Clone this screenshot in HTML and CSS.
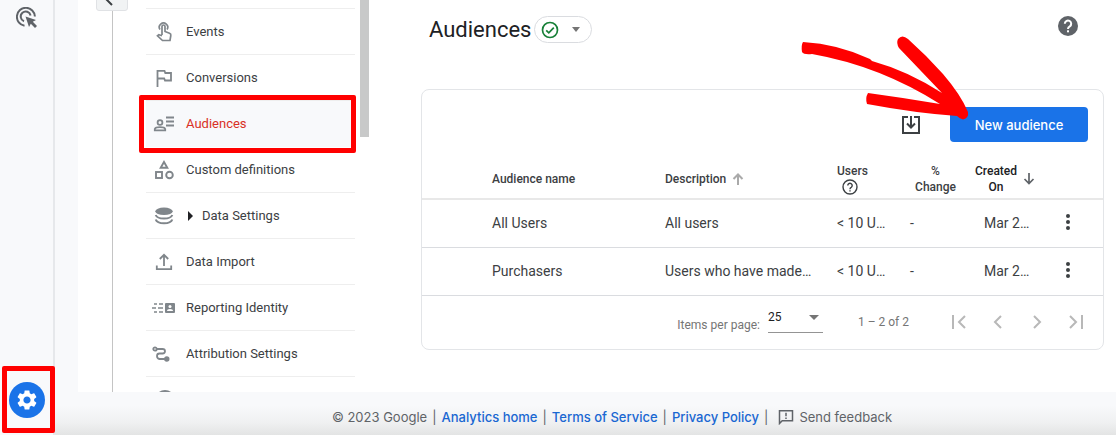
FILE: index.html
```html
<!DOCTYPE html>
<html lang="en">
<head>
  <meta charset="UTF-8" />
  <title>Audiences</title>
  <meta name="viewport" content="width=device-width, initial-scale=1.0" />
  <link rel="stylesheet" href="styles.css">
</head>
<body>

  <nav class="rail" aria-label="Main">
    <a href="#" class="rail-link" title="Advertising">
      <svg width="22" height="22" viewBox="0 0 22 22" fill="none" stroke="#5f6368" stroke-width="2">
        <path d="M8.500 18.700A9 9 0 1 1 18.900 9.500" />
        <path d="M8 14.200A5 5 0 1 1 14.600 8.500" />
        <path d="M9.500 9.500L20 13L16.800 14.700L21 19L19 21L14.800 16.700L13 20Z" fill="#5f6368" stroke="none" />
      </svg>
    </a>
    <a href="#" class="rail-link rail-admin" title="Admin">
      <svg width="24" height="24" viewBox="0 0 24 24" fill="#fff">
        <path d="M19.140 12.940c.04-.3.060-.61.060-.94 0-.32-.02-.64-.07-.94l2.030-1.580c.18-.14.230-.41.120-.61l-1.920-3.320c-.12-.22-.37-.29-.59-.22l-2.390.96c-.5-.38-1.030-.7-1.620-.94l-.36-2.540c-.04-.24-.24-.41-.48-.41h-3.840c-.24 0-.43.170-.47.410l-.36 2.540c-.59.240-1.130.570-1.620.940l-2.390-.96c-.22-.08-.47 0-.59.220L2.740 8.870c-.12.210-.08.470.120.610l2.030 1.580c-.05.300-.09.630-.09.940s.02.640.070.940l-2.030 1.580c-.18.140-.23.410-.12.610l1.920 3.320c.12.220.370.290.590.220l2.390-.96c.5.380 1.030.700 1.620.940l.36 2.540c.05.240.240.410.480.410h3.840c.24 0 .44-.17.470-.41l.36-2.540c.59-.24 1.130-.56 1.620-.94l2.390.96c.22.080.470 0 .59-.22l1.920-3.320c.12-.22.070-.47-.12-.61l-2.010-1.580zM12 15.600c-1.980 0-3.600-1.620-3.600-3.600s1.620-3.600 3.600-3.600 3.600 1.620 3.600 3.600-1.620 3.600-3.600 3.600z" />
      </svg>
    </a>
  </nav>

  <div class="page">
    <div class="workspace">

      <aside class="sidebar">
        <button class="collapse" aria-label="Back">
          <svg width="20" height="20" viewBox="0 0 20 20" fill="none" stroke="#3c4043" stroke-width="2"><path d="M16 9H4M10 3L4 9L10 15" /></svg>
        </button>
        <ul class="menu">
          <li>
            <a href="#">
              <svg width="24" height="24" viewBox="0 0 24 24" fill="none" stroke="#80868b" stroke-width="1.700">
                <path d="M8 9.500A4.200 4.200 0 1 1 15 9.500" />
                <path d="M10 15V6.500a1.500 1.500 0 0 1 3 0V11.500L17.500 13.200Q19.200 14 18.800 15.500L18 20.500H10.500L5.500 15.800L6.800 14.800L10 15.800" />
              </svg>
              Events
            </a>
          </li>
          <li>
            <a href="#">
              <svg width="24" height="24" viewBox="0 0 24 24" fill="none" stroke="#80868b" stroke-width="1.800">
                <path d="M5.500 21V4.800H12.500L13.300 7H19V14.500H13L12.200 12.500H5.500" />
              </svg>
              Conversions
            </a>
          </li>
          <li class="current">
            <a href="#" aria-current="page">
              <svg width="24" height="24" viewBox="0 0 24 24" fill="none" stroke="#80868b" stroke-width="1.800">
                <circle cx="8" cy="10.500" r="2.400" />
                <path d="M2.800 18.300V17Q3.500 15.200 8 15.200T13.200 17V18.300Z" />
                <path d="M14 5.500H22M14 9.500H22M14 13.500H22" />
              </svg>
              Audiences
            </a>
          </li>
          <li>
            <a href="#">
              <svg width="24" height="24" viewBox="0 0 24 24" fill="none" stroke="#80868b" stroke-width="1.900">
                <path d="M12 4L15.300 9.700H8.700Z" />
                <rect x="4" y="14" width="6" height="6" />
                <circle cx="17.500" cy="17" r="3.300" />
              </svg>
              Custom definitions
            </a>
          </li>
          <li>
            <a href="#">
              <svg width="24" height="24" viewBox="0 0 24 24" fill="none" stroke="#80868b" stroke-width="2">
                <ellipse cx="12" cy="7.300" rx="8.700" ry="3.700" fill="#80868b" stroke="none" />
                <path d="M3.700 11Q5 14.500 12 14.500T20.300 11" />
                <path d="M3.700 15.500Q5 19.300 12 19.300T20.300 15.500" />
              </svg>
              <span class="expand"></span>
              Data Settings
            </a>
          </li>
          <li>
            <a href="#">
              <svg width="24" height="24" viewBox="0 0 24 24" fill="none" stroke="#80868b" stroke-width="1.800">
                <path d="M12 16V5M7.800 9L12 4.800L16.200 9M4.800 15.500V19.200H19.200V15.500" />
              </svg>
              Data Import
            </a>
          </li>
          <li>
            <a href="#">
              <svg width="24" height="24" viewBox="0 0 24 24" fill="none" stroke="#80868b" stroke-width="1.500">
                <path d="M2 8H5M7 8H11M0 12H4M6 12H11M2 16H5M7 16H11" />
                <rect x="13" y="7" width="10" height="10" rx="1" fill="#80868b" stroke="none" />
                <circle cx="18" cy="10.500" r="1.500" fill="#fff" stroke="none" />
                <path d="M15 15Q15 13 18 13T21 15Z" fill="#fff" stroke="none" />
              </svg>
              Reporting Identity
            </a>
          </li>
          <li>
            <a href="#">
              <svg width="24" height="24" viewBox="0 0 24 24" fill="none" stroke="#80868b" stroke-width="1.800">
                <circle cx="3" cy="7" r="1.700" />
                <path d="M5 7H10.500Q13 7 13 9.200T10.500 11.500H7.500Q5 11.500 5 14T7.500 17H13" />
                <circle cx="14.800" cy="17" r="1.800" fill="#80868b" />
              </svg>
              Attribution Settings
            </a>
          </li>
          <li>
            <a href="#" aria-label="History">
              <svg width="24" height="24" viewBox="0 0 24 24" fill="none" stroke="#80868b" stroke-width="2">
                <circle cx="13" cy="12" r="9" />
                <path d="M13 8V13L17 15" />
              </svg>
            </a>
          </li>
        </ul>
        <div class="scroll-thumb"></div>
      </aside>

      <main class="content">
        <header class="content-head">
          <h1>Audiences</h1>
          <button class="status" aria-label="Status">
            <svg width="18" height="18" viewBox="0 0 18 18" fill="none" stroke="#188038" stroke-width="1.700"><circle cx="9" cy="9" r="7.500" /><path d="M5.200 9.300L7.800 11.900L12.800 6.600" /></svg>
            <span class="caret"></span>
          </button>
          <button class="icon-btn help" aria-label="Help">
            <svg width="20" height="20" viewBox="0 0 20 20"><circle cx="10" cy="10" r="10" fill="#5f6368" /><path d="M6.800 7.800a3.200 3.200 0 1 1 5 2.600Q10 11.500 10 13" fill="none" stroke="#fff" stroke-width="2" /><rect x="9" y="14.300" width="2" height="2" fill="#fff" /></svg>
          </button>
        </header>

        <section class="card">
          <div class="toolbar">
            <button class="icon-btn" aria-label="Download">
              <svg width="20" height="20" viewBox="0 0 20 20" fill="none" stroke="#3c4043" stroke-width="2"><path d="M7 2H2V18H18V2H13M10 1V12M6 8.500L10 12.500L14 8.500" /></svg>
            </button>
            <div class="primary-wrap">
              <button class="primary">New audience</button>
              <svg class="pointer" width="172" height="88" viewBox="800 34 172 88" fill="#f00">
                <path d="M803 42Q838 44 870 59L872 61Q908 71 942 93L899 48Q896 43 898 39Q902 34 908 39Q926 55 943 74Q961 95 968 112Q969 118 963 119.500Q960 119 957 116Q915 113 867 104Q865 98 868 93Q905 98 940 104Q880 66 812 54Q804 55 802 52Q801 45 803 42Z" />
              </svg>
            </div>
          </div>

          <table>
            <colgroup>
              <col class="col-name"><col><col class="col-users"><col class="col-change"><col class="col-created"><col class="col-more">
            </colgroup>
            <thead>
              <tr>
                <th>Audience name</th>
                <th>
                  <span class="sortable">Description
                    <svg width="12" height="12" viewBox="0 0 12 12" fill="none" stroke="#aaa" stroke-width="2"><path d="M6 12V1.500M1.500 6L6 1.500L10.500 6" /></svg>
                  </span>
                </th>
                <th>
                  <span class="users-head">Users
                    <svg width="16" height="16" viewBox="0 0 16 16" fill="none" stroke="#3c4043" stroke-width="1.400"><circle cx="8" cy="8" r="7" /><path d="M5.800 6.500a2.200 2.200 0 1 1 3.400 1.800Q8 9 8 10.200M8 11.200V12.600" /></svg>
                  </span>
                </th>
                <th class="center">%<br>Change</th>
                <th>
                  <span class="sortable sorted"><span>Created<br>On</span>
                    <svg width="12" height="12" viewBox="0 0 12 12" fill="none" stroke="#5f6368" stroke-width="1.700"><path d="M6 0V10.500M1.500 6L6 10.500L10.500 6" /></svg>
                  </span>
                </th>
                <th></th>
              </tr>
            </thead>
            <tbody>
              <tr>
                <td>All Users</td>
                <td>All users</td>
                <td>&lt; 10 U…</td>
                <td>-</td>
                <td class="date">Mar 2…</td>
                <td><button class="icon-btn more" aria-label="More actions for All Users"><svg width="6" height="16" viewBox="0 0 6 16" fill="#3c4043"><circle cx="3" cy="2" r="2" /><circle cx="3" cy="8" r="2" /><circle cx="3" cy="14" r="2" /></svg></button></td>
              </tr>
              <tr>
                <td>Purchasers</td>
                <td>Users who have made…</td>
                <td>&lt; 10 U…</td>
                <td>-</td>
                <td class="date">Mar 2…</td>
                <td><button class="icon-btn more" aria-label="More actions for Purchasers"><svg width="6" height="16" viewBox="0 0 6 16" fill="#3c4043"><circle cx="3" cy="2" r="2" /><circle cx="3" cy="8" r="2" /><circle cx="3" cy="14" r="2" /></svg></button></td>
              </tr>
            </tbody>
          </table>

          <div class="paginator">
            <label for="pageSize">Items per page:</label>
            <span class="select-wrap">
              <select id="pageSize"><option>25</option><option>50</option><option>100</option></select>
              <span class="caret"></span>
            </span>
            <span class="range">1 – 2 of 2</span>
            <div class="pages">
              <button class="icon-btn" aria-label="First page"><svg width="16" height="16" viewBox="0 0 16 16"><path d="M2 1V15M14 2L8 8L14 14" /></svg></button>
              <button class="icon-btn" aria-label="Previous page"><svg width="16" height="16" viewBox="0 0 16 16"><path d="M11 2L5 8L11 14" /></svg></button>
              <button class="icon-btn" aria-label="Next page"><svg width="16" height="16" viewBox="0 0 16 16"><path d="M5 2L11 8L5 14" /></svg></button>
              <button class="icon-btn" aria-label="Last page"><svg width="16" height="16" viewBox="0 0 16 16"><path d="M2 2L8 8L2 14M14 1V15" /></svg></button>
            </div>
          </div>
        </section>
      </main>
    </div>

    <footer class="footer">
      <span>© 2023 Google</span>
      <span>|</span>
      <a href="#">Analytics home</a>
      <span>|</span>
      <a href="#">Terms of Service</a>
      <span>|</span>
      <a href="#">Privacy Policy</a>
      <span>|</span>
      <button class="feedback">
        <svg width="16" height="16" viewBox="0 0 16 16" fill="none" stroke="#5f6368" stroke-width="1.500"><path d="M1.500 14.500V1.800H14.500V11.800H4.200Z" /><path d="M8 3.800V7.300M8 8.600V10.100" /></svg>
        Send feedback
      </button>
    </footer>
  </div>

</body>
</html>
```
FILE: styles.css
```css
* {
  box-sizing: border-box;
}

body {
  margin: 0;
  height: 100vh;
  display: flex;
  overflow: hidden;
  background: #f8f9fb;
  font-family: Roboto, "Liberation Sans", sans-serif;
  font-size: 13px;
  color: #3c4043;
}

a {
  color: inherit;
  text-decoration: none;
}

button {
  font: inherit;
  color: inherit;
  border: none;
  background: none;
  padding: 0;
  cursor: pointer;
}

svg {
  display: block;
  flex: none;
}

.caret {
  border: 4px solid transparent;
  border-top: 5px solid #757575;
  border-bottom: none;
}

/* Left rail */
.rail {
  width: 55px;
  flex: none;
  display: flex;
  flex-direction: column;
  justify-content: space-between;
  align-items: center;
  padding: 7px 0 17px;
  border-right: 2px solid #e6e8eb;
}

.rail-admin {
  position: relative;
  width: 36px;
  height: 36px;
  display: flex;
  align-items: center;
  justify-content: center;
  border-radius: 50%;
  background: #1a73e8;
}

.rail-admin::after {
  content: "";
  position: absolute;
  inset: -16px -10px -15px -7px;
  border: 5px solid #f00;
  border-radius: 2px;
}

.page {
  flex: 1;
  min-width: 0;
  display: flex;
  flex-direction: column;
}

.workspace {
  flex: 1;
  min-height: 0;
  margin-left: 23px;
  display: flex;
  overflow: hidden;
  background: #fff;
}

/* Settings menu */
.sidebar {
  position: relative;
  width: 291px;
  flex: none;
  display: flex;
  justify-content: space-between;
  padding-left: 34px;
}

.collapse {
  position: absolute;
  top: -20px;
  left: 18px;
  width: 32px;
  height: 31px;
  display: flex;
  align-items: flex-end;
  justify-content: center;
  border: 1px solid #e0e2e5;
  border-radius: 3px;
  background: #f1f3f4;
}

.menu {
  flex: 1;
  margin: 0;
  padding: 8px 5px 0 33px;
  list-style: none;
  border-left: 1px solid #c4c4c4;
}

.menu li {
  position: relative;
  height: 46px;
  border-top: 1px solid #eee;
}

.menu a {
  height: 100%;
  display: flex;
  align-items: center;
  padding-left: 6px;
}

.menu svg {
  margin-right: 10px;
}

.menu .current {
  background: #f8f9fb;
  color: #d93025;
}

.menu .current + li {
  border-color: #f8f9fb;
}

.menu .current::after {
  content: "";
  position: absolute;
  z-index: 1;
  inset: -6px -1px -7px -7px;
  border: 5px solid #f00;
  border-radius: 2px;
}

.expand {
  margin: 0 9px 0 2px;
  border: 5px solid transparent;
  border-left-color: #202124;
  border-right: none;
}

.scroll-thumb {
  width: 9px;
  height: 137px;
  background: #c8c9c9;
}

/* Content */
.content {
  flex: 1;
  min-width: 0;
  padding: 0 12px 0 52px;
}

.content-head {
  height: 89px;
  display: flex;
  align-items: flex-start;
  padding: 16px 26px 0 8px;
}

h1 {
  margin: 0;
  font-size: 22px;
  line-height: 27px;
  font-weight: 400;
  color: #202124;
}

.status {
  width: 58px;
  height: 27px;
  margin-left: 3px;
  display: flex;
  align-items: center;
  justify-content: space-between;
  padding: 0 11px 0 6px;
  border: 1px solid #dadce0;
  border-radius: 14px;
}

.help {
  margin-left: auto;
}

.card {
  border: 1px solid #e3e5e8;
  border-radius: 8px;
}

.toolbar {
  height: 69px;
  display: flex;
  justify-content: flex-end;
  align-items: center;
  gap: 29px;
  padding-right: 15px;
}

.primary-wrap {
  position: relative;
}

.primary {
  width: 138px;
  height: 35px;
  border-radius: 4px;
  background: #1a73e8;
  color: #fff;
  font: 500 13px Inter, sans-serif;
}

.pointer {
  position: absolute;
  top: -73px;
  right: 116px;
  pointer-events: none;
}

table {
  width: 100%;
  table-layout: fixed;
  border-collapse: collapse;
}

.col-name {
  width: 243px;
}

.col-users {
  width: 73px;
}

.col-change {
  width: 65px;
}

.col-created {
  width: 84px;
}

.col-more {
  width: 44px;
}

th {
  height: 40px;
  padding: 0;
  font-size: 12px;
  line-height: 16px;
  font-weight: 500;
  text-align: left;
}

td {
  height: 48px;
  padding: 0;
  border-bottom: 1px solid #dadce0;
  font-size: 14px;
  white-space: nowrap;
}

th:first-child,
td:first-child {
  padding-left: 70px;
}

thead tr {
  border-bottom: 2px solid #e8e8e8;
}

.center {
  text-align: center;
  padding-right: 14px;
}

.sortable {
  display: flex;
  align-items: center;
  gap: 6px;
}

.sorted {
  color: #202124;
  text-align: center;
}

.users-head {
  display: inline-flex;
  flex-direction: column;
}

.users-head svg {
  margin-left: 5px;
}

.date {
  padding-left: 9px;
}

.more {
  padding: 0 6px;
}

.paginator {
  height: 53px;
  display: flex;
  align-items: center;
  justify-content: flex-end;
  padding-right: 19px;
  font-size: 12px;
  color: #757575;
}

.paginator label {
  padding-top: 5px;
}

.select-wrap {
  position: relative;
  margin: 0 35px 4px 8px;
}

.select-wrap .caret {
  position: absolute;
  top: 7px;
  right: 4px;
  border-width: 5px 5px 0;
  pointer-events: none;
}

select {
  width: 55px;
  height: 25px;
  padding: 0 0 5px;
  appearance: none;
  border: none;
  border-bottom: 1px solid #949494;
  border-radius: 0;
  background: none;
  font: 12px Roboto, "Liberation Sans", sans-serif;
  color: #202124;
}

.pages {
  display: flex;
  gap: 23px;
  margin-left: 42px;
}

.pages path {
  fill: none;
  stroke: #b8b8b8;
  stroke-width: 2;
}

.footer {
  height: 43px;
  flex: none;
  display: flex;
  align-items: center;
  justify-content: center;
  gap: 5px;
  padding: 6px 0 0 53px;
  background: linear-gradient(#f8f9fb 30%, #f0f1f2 70%, #e3e4e4);
  font-family: Inter, sans-serif;
  font-size: 13px;
  color: #5f6368;
}

.footer a {
  color: #1967d2;
  font-weight: 500;
}

.feedback {
  display: flex;
  align-items: center;
  gap: 5px;
  margin-left: 5px;
}
```
